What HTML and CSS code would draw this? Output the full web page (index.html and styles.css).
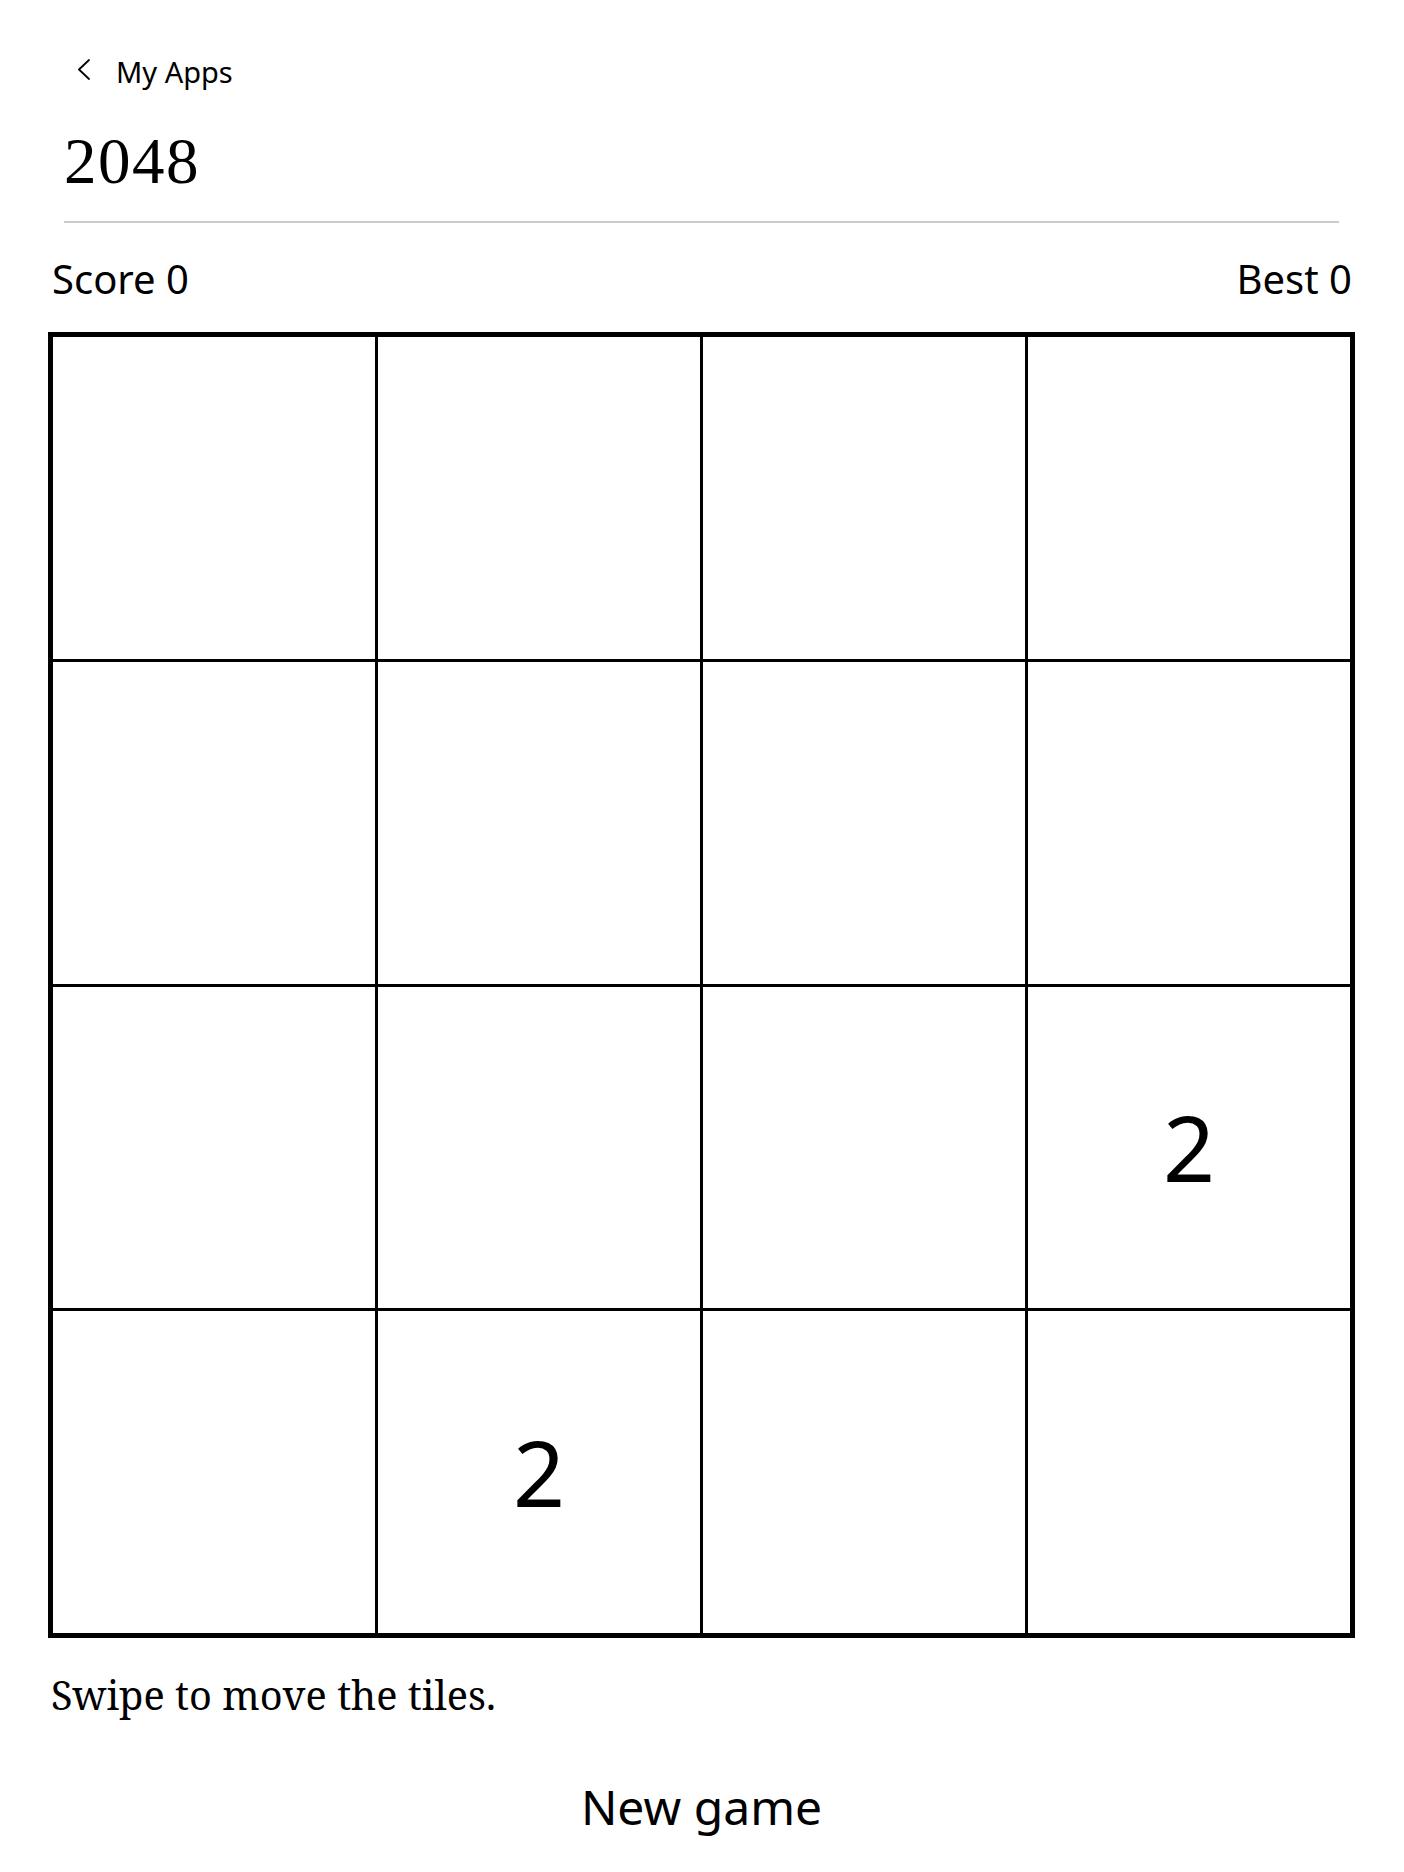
FILE: index.html
```html
<!DOCTYPE html>
<html lang="en">
<head>
<meta charset="utf-8">
<title>2048</title>
<link rel="stylesheet" href="styles.css">
</head>
<body>
<header class="header">
  <a class="back" href="#">
    <svg class="back-icon" width="14" height="22" viewBox="0 0 14 22" aria-hidden="true">
      <path d="M13 1 L3 10.5 L13 20" fill="none" stroke="#000" stroke-width="1.8" stroke-linecap="round" stroke-linejoin="round"/>
    </svg>
    <span class="back-label">My Apps</span>
  </a>
  <h1 class="title">2048</h1>
  <div class="divider"></div>
</header>
<main class="game">
  <div class="scores">
    <span class="score">Score 0</span>
    <span class="score">Best 0</span>
  </div>
  <div class="board">
    <div class="cell"></div><div class="cell"></div><div class="cell"></div><div class="cell"></div>
    <div class="cell"></div><div class="cell"></div><div class="cell"></div><div class="cell"></div>
    <div class="cell"></div><div class="cell"></div><div class="cell"></div><div class="cell">2</div>
    <div class="cell"></div><div class="cell">2</div><div class="cell"></div><div class="cell"></div>
  </div>
  <p class="hint">Swipe to move the tiles.</p>
  <div class="actions">
    <button class="new-game" type="button">New game</button>
  </div>
</main>
</body>
</html>
```
FILE: styles.css
```css
html, body {
  margin: 0;
  padding: 0;
  background: #fff;
  color: #000;
}
body {
  width: 1404px;
  font-family: "Noto Sans", "Open Sans", sans-serif;
}
.header {
  padding: 57px 0 0 64px;
}
.back {
  display: flex;
  align-items: flex-start;
  height: 29px;
  color: #000;
  text-decoration: none;
}
.back-icon {
  margin: 2px 0 0 12px;
  flex: none;
}
.back-label {
  margin-left: 26px;
  font-size: 29px;
  line-height: 29px;
}
.title {
  margin: 43px 0 0 0;
  font-family: "Liberation Serif", "Times New Roman", serif;
  font-weight: 400;
  font-size: 65px;
  line-height: 65px;
  height: 65px;
  letter-spacing: 1.5px;
}
.divider {
  margin: 27px 65px 0 0;
  height: 2px;
  background: #cbcbcb;
}
.game {
  margin: 0 49px 0 48px;
}
.scores {
  display: flex;
  justify-content: space-between;
  margin-top: 36px;
  padding: 0 3px 0 4px;
  height: 40px;
}
.score {
  font-size: 40px;
  line-height: 40px;
}
.board {
  margin-top: 33px;
  display: grid;
  grid-template-columns: repeat(4, 322px);
  grid-template-rows: repeat(4, 1fr);
  gap: 3px;
  width: 1297px;
  height: 1296px;
  border: 5px solid #000;
  background: #000;
}
.cell {
  background: #fff;
  display: flex;
  align-items: center;
  justify-content: center;
  font-size: 91px;
  line-height: 91px;
}
.hint {
  margin: 38px 0 0 3px;
  font-family: "Noto Serif", "DejaVu Serif", serif;
  font-size: 39.7px;
  line-height: 38px;
}
.actions {
  display: flex;
  justify-content: center;
  margin-top: 62px;
}
.new-game {
  font-family: "Noto Sans", "Open Sans", sans-serif;
  font-size: 48px;
  line-height: 62px;
  padding: 0;
  border: 0;
  background: none;
  color: #000;
  overflow: visible;
}
```
